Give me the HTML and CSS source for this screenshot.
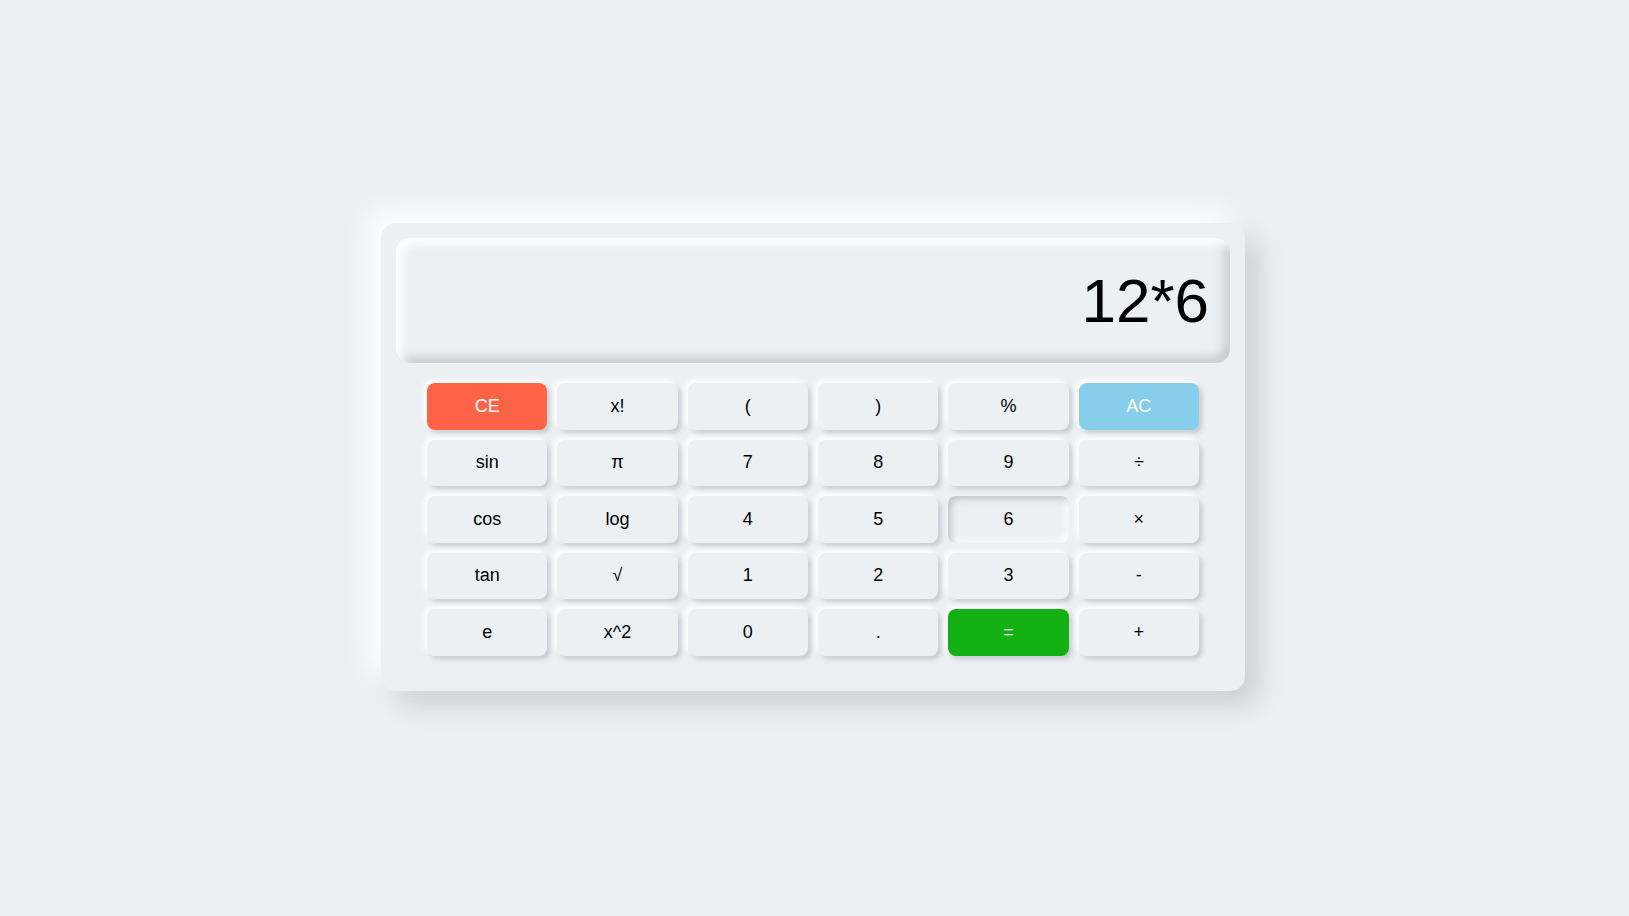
FILE: index.html
```html
<!DOCTYPE html>
<html>
<head>
<meta charset="utf-8">
<title>Calculator</title>
<link rel="stylesheet" href="styles.css">
</head>
<body>
<div class="calc">
  <div class="display">12*6</div>
  <div class="keys">
    <button class="key key-ce">CE</button>
    <button class="key">x!</button>
    <button class="key">(</button>
    <button class="key">)</button>
    <button class="key">%</button>
    <button class="key key-ac">AC</button>

    <button class="key">sin</button>
    <button class="key">π</button>
    <button class="key">7</button>
    <button class="key">8</button>
    <button class="key">9</button>
    <button class="key">÷</button>

    <button class="key">cos</button>
    <button class="key">log</button>
    <button class="key">4</button>
    <button class="key">5</button>
    <button class="key key-pressed">6</button>
    <button class="key">×</button>

    <button class="key">tan</button>
    <button class="key">√</button>
    <button class="key">1</button>
    <button class="key">2</button>
    <button class="key">3</button>
    <button class="key">-</button>

    <button class="key">e</button>
    <button class="key">x^2</button>
    <button class="key">0</button>
    <button class="key">.</button>
    <button class="key key-eq">=</button>
    <button class="key">+</button>
  </div>
</div>
</body>
</html>
```

FILE: styles.css
```css
* { box-sizing: border-box; }

html, body {
  margin: 0;
  height: 100%;
}

body {
  background: #ecf0f3;
  font-family: "Liberation Sans", Arial, sans-serif;
  display: flex;
  align-items: center;
  justify-content: center;
}

.calc {
  width: 864px;
  height: 468px;
  margin: 0 3px 2px 0;
  padding: 15px;
  background: #ecf0f3;
  border-radius: 15px;
  box-shadow: -14px -14px 26px rgba(255, 255, 255, 0.9),
              14px 14px 26px rgba(160, 168, 176, 0.45);
}

.display {
  height: 125px;
  border-radius: 14px;
  background: #ecf0f3;
  display: flex;
  align-items: center;
  justify-content: flex-end;
  padding-right: 21px;
  font-size: 62px;
  color: #000;
  box-shadow: inset 6px 6px 10px rgba(255, 255, 255, 1),
              inset -6px -6px 10px rgba(170, 176, 184, 0.55);
}

.keys {
  margin: 20px 31px 0;
  display: grid;
  grid-template-columns: repeat(6, 1fr);
  grid-auto-rows: 46.5px;
  gap: 10px;
}

.key {
  border: none;
  border-radius: 8px;
  background: #ecf0f3;
  font-family: "Liberation Sans", Arial, sans-serif;
  font-size: 18px;
  color: #000;
  padding: 0;
  box-shadow: -3px -3px 6px rgba(255, 255, 255, 1),
              3px 3px 5px rgba(160, 166, 174, 0.55);
}

.key-ce {
  background: #ff6347;
  color: #fff;
}

.key-ac {
  background: #87ceeb;
  color: #fff;
}

.key-eq {
  background: #13b013;
  color: #fff;
}

.key-pressed {
  box-shadow: inset 3px 3px 6px rgba(160, 166, 174, 0.6),
              inset -3px -3px 6px rgba(255, 255, 255, 1);
}
```
